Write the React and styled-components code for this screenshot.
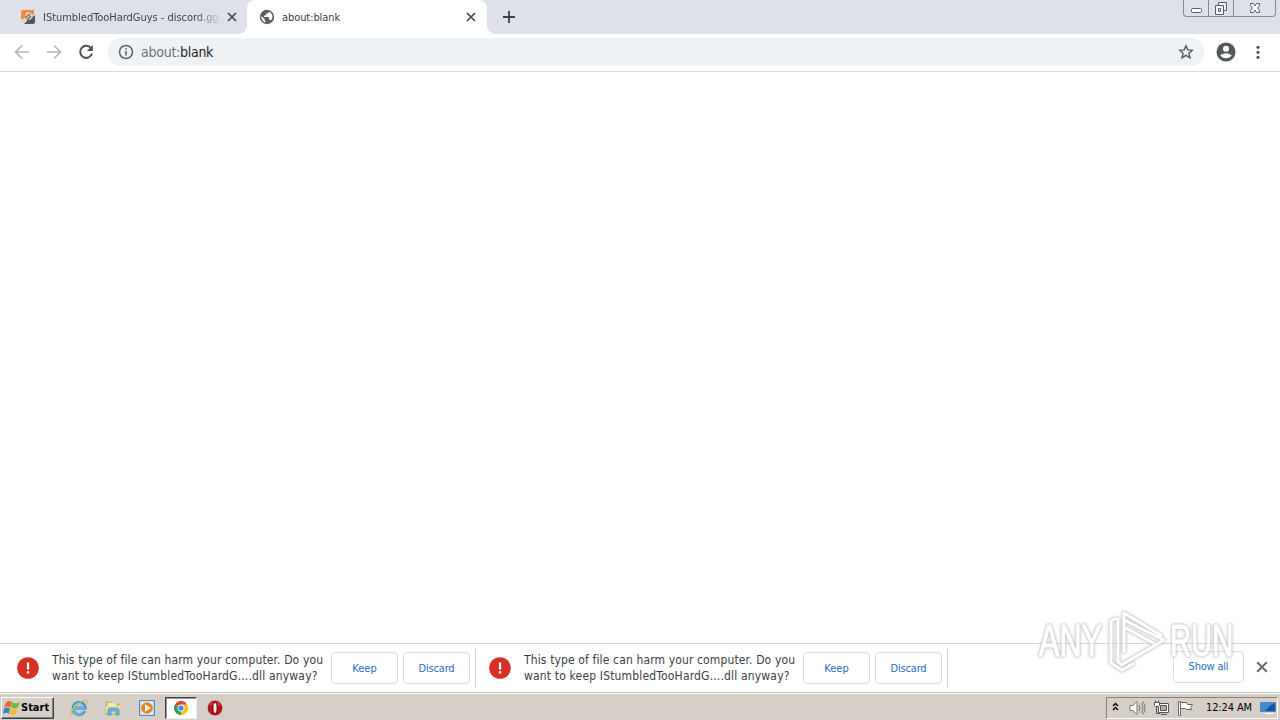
import React from "react";
import styled, { createGlobalStyle, css } from "styled-components";

const GlobalStyle = createGlobalStyle`
  * { box-sizing: border-box; }
  body { margin: 0; overflow: hidden; background: #fff; }
`;

const Screen = styled.div`
  position: relative;
  display: flex;
  flex-direction: column;
  width: 1280px;
  height: 720px;
  background: #fff;
  font-family: "DejaVu Sans Condensed", "DejaVu Sans", sans-serif;
  font-stretch: condensed;
  font-size: 11px;
  color: #3c4043;
  overflow: hidden;
`;

const Label = styled.span`
  white-space: pre;
  font-size: ${(p) => p.$size || 11}px;
  line-height: 16px;
  letter-spacing: ${(p) => p.$track || 0}px;
  color: ${(p) => p.$color || "inherit"};
  font-weight: ${(p) => (p.$bold ? 700 : 400)};
`;

const Icon = styled.svg`
  display: block;
  flex: none;
`;

const TabStrip = styled.header`
  display: flex;
  height: 34px;
  flex: none;
  background: #dee1e9;
`;

const Tab = styled.div`
  position: relative;
  display: flex;
  align-items: center;
  height: 34px;
  width: ${(p) => p.$width}px;
  padding: 0 ${(p) => p.$end}px 0 ${(p) => p.$inset}px;
  gap: 7px;
  ${(p) =>
    p.$active &&
    css`
      background: #fff;
      border-radius: 8px 8px 0 0;
      &::before,
      &::after {
        content: "";
        position: absolute;
        bottom: 0;
        width: 8px;
        height: 8px;
      }
      &::before {
        left: -8px;
        background: radial-gradient(circle at 0 0, transparent 7.5px, #fff 8px);
      }
      &::after {
        right: -8px;
        background: radial-gradient(circle at 100% 0, transparent 7.5px, #fff 8px);
      }
    `}
`;

const TabTitle = styled.div`
  flex: 1;
  min-width: 0;
  overflow: hidden;
  display: flex;
  padding-top: 1px;
  ${(p) =>
    p.$fade &&
    css`
      mask-image: linear-gradient(to right, #000 152px, transparent 180px);
    `}
`;

const NewTab = styled.button`
  display: flex;
  align-items: center;
  justify-content: center;
  width: 28px;
  margin-left: 8px;
  padding: 0;
  border: 0;
  background: none;
`;

const WindowControls = styled.div`
  display: flex;
  height: 17px;
  margin: 0 4px 0 auto;
  border: 1px solid #858a96;
  border-top: 0;
  border-radius: 0 0 4px 4px;
`;

const WindowButton = styled.div`
  display: flex;
  justify-content: center;
  width: ${(p) => p.$width}px;
  border-left: ${(p) => (p.$first ? 0 : 1)}px solid #858a96;
`;

const Toolbar = styled.div`
  display: flex;
  align-items: center;
  height: 38px;
  flex: none;
  padding: 0 14px 1px;
  border-bottom: 1px solid #d9dadc;
`;

const NavIcons = styled.div`
  display: flex;
  gap: 16px;
  width: 94px;
`;

const Omnibox = styled.div`
  display: flex;
  align-items: center;
  width: 1096px;
  flex: none;
  height: 28px;
  padding: 0 10px;
  border-radius: 14px;
  background: #eff2f5;
  color: #202124;
`;

const Address = styled.div`
  display: flex;
  flex: 1;
  margin-left: 7px;
`;

const ToolbarEnd = styled.div`
  display: flex;
  align-items: center;
  gap: 13px;
  margin-left: 11px;
`;

const Page = styled.main`
  flex: 1;
`;

const Shelf = styled.footer`
  display: flex;
  height: 49px;
  flex: none;
  border-top: 1px solid #d6d7d9;
  background: #fff;
`;

const Download = styled.div`
  display: flex;
  align-items: center;
  width: ${(p) => p.$width}px;
  height: 38px;
  margin-top: 5px;
  padding-left: ${(p) => p.$inset}px;
  border-right: 1px solid #d0d1d3;
`;

const Warning = styled.div`
  display: flex;
  flex-direction: column;
  width: 292px;
  flex: none;
  padding-left: 13px;
`;

const ShelfButton = styled.button`
  display: flex;
  align-items: center;
  justify-content: center;
  width: ${(p) => p.$width || 67}px;
  flex: none;
  height: 32px;
  margin: 0 5px 0 0;
  padding: ${(p) => p.$drop || 0}px 0 0;
  border: 1px solid #dadce0;
  border-radius: 4px;
  background: #fff;
  font-family: inherit;
  font-stretch: inherit;
  color: #2a6cc8;
`;

const ShelfEnd = styled.div`
  display: flex;
  align-items: center;
  gap: 7px;
  margin: 7px 12px 0 auto;
  height: 32px;
`;

const Taskbar = styled.nav`
  display: flex;
  align-items: center;
  height: 28px;
  flex: none;
  padding: 2px 0 0 1px;
  border-top: 1px solid #c3c0ba;
  box-shadow: inset 0 1px #fff;
  background: #d5cfc7;
  color: #000;
`;

const StartButton = styled.button`
  display: flex;
  align-items: center;
  width: 53px;
  height: 22px;
  margin: 0 9px 0 0;
  padding: 0 1px;
  border: 1px solid;
  border-color: #fff #404040 #404040 #fff;
  box-shadow: inset -1px -1px #858078;
  background: #d5cfc7;
  font-family: inherit;
  font-stretch: inherit;
  color: #000;
`;

const TaskButton = styled.div`
  display: flex;
  align-items: center;
  justify-content: center;
  width: 32px;
  height: 22px;
  margin-right: 2px;
  ${(p) =>
    p.$pressed &&
    css`
      background: #fff;
      border: 1px solid;
      border-color: #404040 #eee #eee #404040;
      box-shadow: inset 1px 1px #999;
    `}
`;

const Tray = styled.div`
  display: flex;
  align-items: center;
  width: 172px;
  height: 22px;
  margin: 0 2px 0 auto;
  padding-left: 5px;
  border: 1px solid;
  border-color: #858078 #fff #fff #858078;
`;

const TrayItem = styled.div`
  display: flex;
  flex: none;
  width: ${(p) => p.$width}px;
`;

const Watermark = styled.div`
  position: absolute;
  left: 1039px;
  top: 608px;
  display: flex;
  align-items: center;
  width: 196px;
  height: 66px;
  opacity: 0.75;
  pointer-events: none;
  filter: drop-shadow(0 0 1px #aaa) drop-shadow(0 0 1.5px #bbb);
`;

const Wordmark = styled.div`
  width: ${(p) => p.$width}px;
  flex: none;
  font: 400 45px/68px "Liberation Sans", sans-serif;
  color: #fff;
  -webkit-text-stroke: 1.2px #fff;
  white-space: nowrap;
  transform: scaleX(${(p) => p.$stretch});
  transform-origin: 0 50%;
`;

const Cross = ({ size = 10, color = "#45494d", weight = 1.7 }) => (
  <Icon width={size} height={size} viewBox="0 0 10 10" stroke={color} strokeWidth={weight}>
    <path d="M1 1l8 8M9 1l-8 8" />
  </Icon>
);

const AlertBadge = () => (
  <Icon width="22" height="22" viewBox="0 0 22 22">
    <circle cx="11" cy="11" r="10.8" fill="#d93025" />
    <path d="M9.9 5.5h2.3v7H9.9zM9.9 14.2h2.3v2.2H9.9z" fill="#fff" />
  </Icon>
);

const SiteIcon = () => (
  <Icon width="16" height="16" viewBox="0 0 16 16">
    <path d="M3 1h11v4L5 12 1 10V3q0-2 2-2z" fill="#f28b38" />
    <path d="M15 6v7q0 2-2 2H4l5-5z" fill="#58534f" />
    <path d="M0 13l5-5 1-4 3-1 3 2 1 3-3 3-3-1-4 4z" fill="#e2d8cf" />
    <path d="M5 9l5-4M7 11l4-4" stroke="#76604f" strokeWidth="1.2" />
  </Icon>
);

const GlobeIcon = () => (
  <Icon width="16" height="16" viewBox="0 0 16 16">
    <circle cx="8" cy="8" r="7.2" fill="#5b5e61" />
    <path d="M9.800 2.400v.9q0 1.300-1.300 1.300H7v1.300q0 .7-.7.7H5V8h4.200q.7 0 .7.7v2h.7q1 0 1.300.9A5.700 5.700 0 0 0 9.800 2.400zM2.400 7.100L5.800 10.500v.7q0 1.300 1.300 1.300v1.100A5.700 5.700 0 0 1 2.400 7.100z" fill="#fff" />
  </Icon>
);

const StartFlag = () => (
  <Icon width="18" height="18" viewBox="0 0 17 17">
    <path d="M3 3q3-2 5.500 0L7 8Q4 6 1 8z" fill="#e86a2c" />
    <path d="M9 3q3 2 7 0l-2 5q-3 2-6.500 0z" fill="#78b83e" />
    <path d="M1 9q3-2 5.500 0l-1 5q-2-2-5.500 0z" fill="#3c82cc" />
    <path d="M7 9q3 2 6.500 0l-1 5q-3 2-6.500 0z" fill="#f4bd2c" />
  </Icon>
);

const ExplorerIcon = () => (
  <Icon width="18" height="18" viewBox="0 0 18 18" fill="none">
    <path d="M14.5 12a6 6 0 1 1 .5-3H5" stroke="#2589c9" strokeWidth="2.800" />
    <path d="M13.8 12a5.5 5.5 0 1 1 .4-3H5" stroke="#73c9f0" strokeWidth="1.300" />
    <path d="M3 14C-1 19 1 9 9 4s9-3 7 2" stroke="#dfb34a" strokeWidth="1.200" />
  </Icon>
);

const FolderIcon = () => (
  <Icon width="18" height="18" viewBox="0 0 18 18">
    <path d="M2 3h5l1 2h7v10H2z" fill="#e4c86f" stroke="#bea455" strokeWidth=".7" />
    <path d="M4 4h8v3H4z" fill="#ddefcf" />
    <path d="M2 7h14v7H2z" fill="#f4df91" />
    <path d="M4 16v-5q0-2 2-2h7q2 0 2 2v5h-3v-4H7v4z" fill="#69b6de" stroke="#3c91bf" strokeWidth=".7" />
  </Icon>
);

const PlayerIcon = () => (
  <Icon width="16" height="16" viewBox="0 0 16 16">
    <path d="M.5.5h15v15H.5z" fill="#b9d9f3" stroke="#5488bd" />
    <path d="M2.5 1.5h11v13h-11z" fill="#e6f3fc" />
    <circle cx="8" cy="8" r="5.8" fill="#ec8117" />
    <path d="M6 4.2l6 3.8-6 3.8z" fill="#fff" />
  </Icon>
);

const ChromeIcon = () => (
  <Icon width="14" height="14" viewBox="0 0 14 14">
    <path d="M7 7L.9 3.5A7 7 0 0 1 13.1 3.5z" fill="#dc4437" />
    <path d="M7 7l6.1-3.5A7 7 0 0 1 7 14z" fill="#f5c623" />
    <path d="M7 7v7A7 7 0 0 1 .9 3.5z" fill="#329c55" />
    <path d="M7 3.5h6.1A7 7 0 0 1 7 14l3-5.2z" fill="#f5c623" />
    <circle cx="7" cy="7" r="3.4" fill="#fff" />
    <circle cx="7" cy="7" r="2.6" fill="#4285d8" />
  </Icon>
);

const OperaIcon = () => (
  <Icon width="16" height="16" viewBox="0 0 16 16">
    <circle cx="8" cy="8" r="7.4" fill="#b71420" />
    <path d="M3 4q5-5 10 0-1 3-5 3T3 4z" fill="#dc6565" opacity=".65" />
    <ellipse cx="8" cy="8" rx="3.1" ry="6.2" fill="#8c0711" />
    <ellipse cx="8" cy="8" rx="1.6" ry="5.1" fill="#f4eeea" />
  </Icon>
);

const warnings = [
  { width: 476, inset: 17 },
  { width: 472, inset: 13 },
];

export default function App() {
  return (
    <Screen>
      <GlobalStyle />
      <TabStrip>
        <Tab $width={247} $inset={20} $end={10}>
          <SiteIcon />
          <TabTitle $fade><Label $track={-0.03}>IStumbledTooHardGuys - discord.gg</Label></TabTitle>
          <Cross />
        </Tab>
        <Tab $active $width={240} $inset={12} $end={11}>
          <GlobeIcon />
          <TabTitle><Label $track={-0.08}>about:blank</Label></TabTitle>
          <Cross />
        </Tab>
        <NewTab>
          <Icon width="12" height="12" viewBox="0 0 12 12" stroke="#3c4043" strokeWidth="1.8"><path d="M6 0v12M0 6h12" /></Icon>
        </NewTab>
        <WindowControls>
          <WindowButton $first $width={24}>
            <Icon width="13" height="16" viewBox="0 0 13 16"><rect x="1.5" y="8.5" width="10" height="4" rx="1" fill="#fff" stroke="#555b66" /></Icon>
          </WindowButton>
          <WindowButton $width={25}>
            <Icon width="14" height="16" viewBox="0 0 14 16" fill="#f5f6f8" stroke="#555b66"><path d="M4.5 2.5h8v8h-8z" /><path d="M1.5 5.5h8v9h-8z" /><path d="M4.5 8.5h2v3h-2z" /></Icon>
          </WindowButton>
          <WindowButton $width={42}>
            <Icon width="12" height="16" viewBox="0 0 12 16"><path d="M1.5 3.5h3L6 6l1.5-2.5h3v2L8.5 8l2 2.5v2h-3L6 10l-1.5 2.5h-3v-2l2-2.5-2-2.5z" fill="#fff" stroke="#555b66" /></Icon>
          </WindowButton>
        </WindowControls>
      </TabStrip>

      <Toolbar>
        <NavIcons>
          <Icon width="16" height="16" viewBox="0 0 16 16" fill="none" stroke="#b5b7ba" strokeWidth="1.7"><path d="M15 8H2M8 1.5L1.5 8 8 14.5" /></Icon>
          <Icon width="16" height="16" viewBox="0 0 16 16" fill="none" stroke="#b5b7ba" strokeWidth="1.7"><path d="M1 8h13M8 1.5L14.5 8 8 14.5" /></Icon>
          <Icon width="16" height="16" viewBox="0 0 16 16" fill="none" stroke="#4d5155" strokeWidth="2"><path d="M13 4.2A6 6 0 1 0 14 9.5" /><path d="M14.8 1v6H8.9z" fill="#4d5155" stroke="none" /></Icon>
        </NavIcons>
        <Omnibox>
          <Icon width="16" height="16" viewBox="0 0 16 16"><circle cx="8" cy="8" r="6.5" fill="none" stroke="#5f6368" strokeWidth="1.5" /><path d="M7.2 7h1.600v4.500H7.200zM7.200 4.300h1.600v1.500H7.200z" fill="#5f6368" /></Icon>
          <Address><Label $size={14} $track={-0.25} $color="#6c7074">about:</Label><Label $size={14} $track={-0.3}>blank</Label></Address>
          <Icon width="16" height="16" viewBox="0 0 16 16"><path d="M8 1.8l1.8 4.1 4.6.4-3.5 3 1.1 4.5L8 11.4l-4 2.4 1.1-4.5-3.5-3 4.6-.4z" fill="none" stroke="#55595e" strokeWidth="1.4" /></Icon>
        </Omnibox>
        <ToolbarEnd>
          <Icon width="22" height="22" viewBox="0 0 22 22"><circle cx="11" cy="11" r="9.5" fill="#54585d" /><circle cx="11" cy="7.8" r="3" fill="#fff" /><path d="M5.2 14.3Q11 10 16.8 14.3Q14.8 17.2 11 17.2T5.2 14.3z" fill="#fff" /></Icon>
          <Icon width="16" height="16" viewBox="0 0 16 16" fill="#54585d"><circle cx="8" cy="3.300" r="1.600" /><circle cx="8" cy="8.300" r="1.600" /><circle cx="8" cy="13.300" r="1.600" /></Icon>
        </ToolbarEnd>
      </Toolbar>

      <Page />

      <Shelf>
        {warnings.map((item) => (
          <Download key={item.width} $width={item.width} $inset={item.inset}>
            <AlertBadge />
            <Warning>
              <Label $size={12} $track={0.13}>This type of file can harm your computer. Do you</Label>
              <Label $size={12} $track={0.17}>want to keep IStumbledTooHardG....dll anyway?</Label>
            </Warning>
            <ShelfButton $drop={1}><Label>Keep</Label></ShelfButton>
            <ShelfButton $drop={1}><Label $track={-0.2}>Discard</Label></ShelfButton>
          </Download>
        ))}
        <ShelfEnd>
          <ShelfButton $width={71}><Label $track={-0.2}>Show all</Label></ShelfButton>
          <Cross size={12} color="#696d71" />
        </ShelfEnd>
      </Shelf>

      <Taskbar>
        <StartButton><StartFlag /><Label $bold $track={0}>Start</Label></StartButton>
        <TaskButton><ExplorerIcon /></TaskButton>
        <TaskButton><FolderIcon /></TaskButton>
        <TaskButton><PlayerIcon /></TaskButton>
        <TaskButton $pressed><ChromeIcon /></TaskButton>
        <TaskButton><OperaIcon /></TaskButton>
        <Tray>
          <TrayItem $width={17}>
            <Icon width="7" height="12" viewBox="0 0 7 12" fill="none" stroke="#000" strokeWidth="1.4"><path d="M1 4l2.500-2.500L6 4M1 8l2.500-2.500L6 8" /></Icon>
          </TrayItem>
          <TrayItem $width={24}>
            <Icon width="17" height="16" viewBox="0 0 17 16" fill="none" stroke="#777"><path d="M1 5.5h3l4-4v13l-4-4H1z" fill="#fff" /><path d="M10 5q2 3 0 6M12 3q4 5 0 10M14 1.5q4 6.500 0 13" /></Icon>
          </TrayItem>
          <TrayItem $width={24}>
            <Icon width="17" height="16" viewBox="0 0 17 16" stroke="#555"><path d="M5.500 3.500h10v9h-10z" fill="#fff" /><path d="M7.500 5.500h6v5h-6z" fill="#aaa" /><path d="M8 14.500h6M3.500 6v7.500h4" fill="none" /><path d="M1.500 2.500h5v3l-1 1h-3l-1-1zM2.500.5v2M5.500.5v2" fill="#fff" /></Icon>
          </TrayItem>
          <TrayItem $width={29}>
            <Icon width="17" height="16" viewBox="0 0 17 16" fill="#fff" stroke="#666"><path d="M1.500 1.500h2v14h-2z" /><path d="M3.500 2.500h6l1 2h5l-2 3 1 2h-5l-1-1h-5z" /></Icon>
          </TrayItem>
          <TrayItem $width={54}><Label $track={-0.12}>12:24 AM</Label></TrayItem>
          <Icon width="16" height="14" viewBox="0 0 16 14"><path d="M.5 1.500h15v9H.5z" fill="#1654a5" stroke="#5689c1" /><path d="M1 2h14Q8 5 5 10H1z" fill="#438bd1" /><path d="M5 12h9v1H5z" fill="#fff" /></Icon>
        </Tray>
      </Taskbar>

      <Watermark>
        <Wordmark $stretch={0.68} $width={64}>ANY</Wordmark>
        <Icon width="67" height="66" viewBox="0 0 67 66" fill="none" strokeLinejoin="round" stroke="#fff" strokeWidth="3">
          <path d="M21 45V5l38 23M21 19l31 17M21 12L61 32 20 56M14 10L8 13v42l11 7 12-7M15 10v44l5 4" />
        </Icon>
        <Wordmark $stretch={0.65} $width={64}>RUN</Wordmark>
      </Watermark>
    </Screen>
  );
}
